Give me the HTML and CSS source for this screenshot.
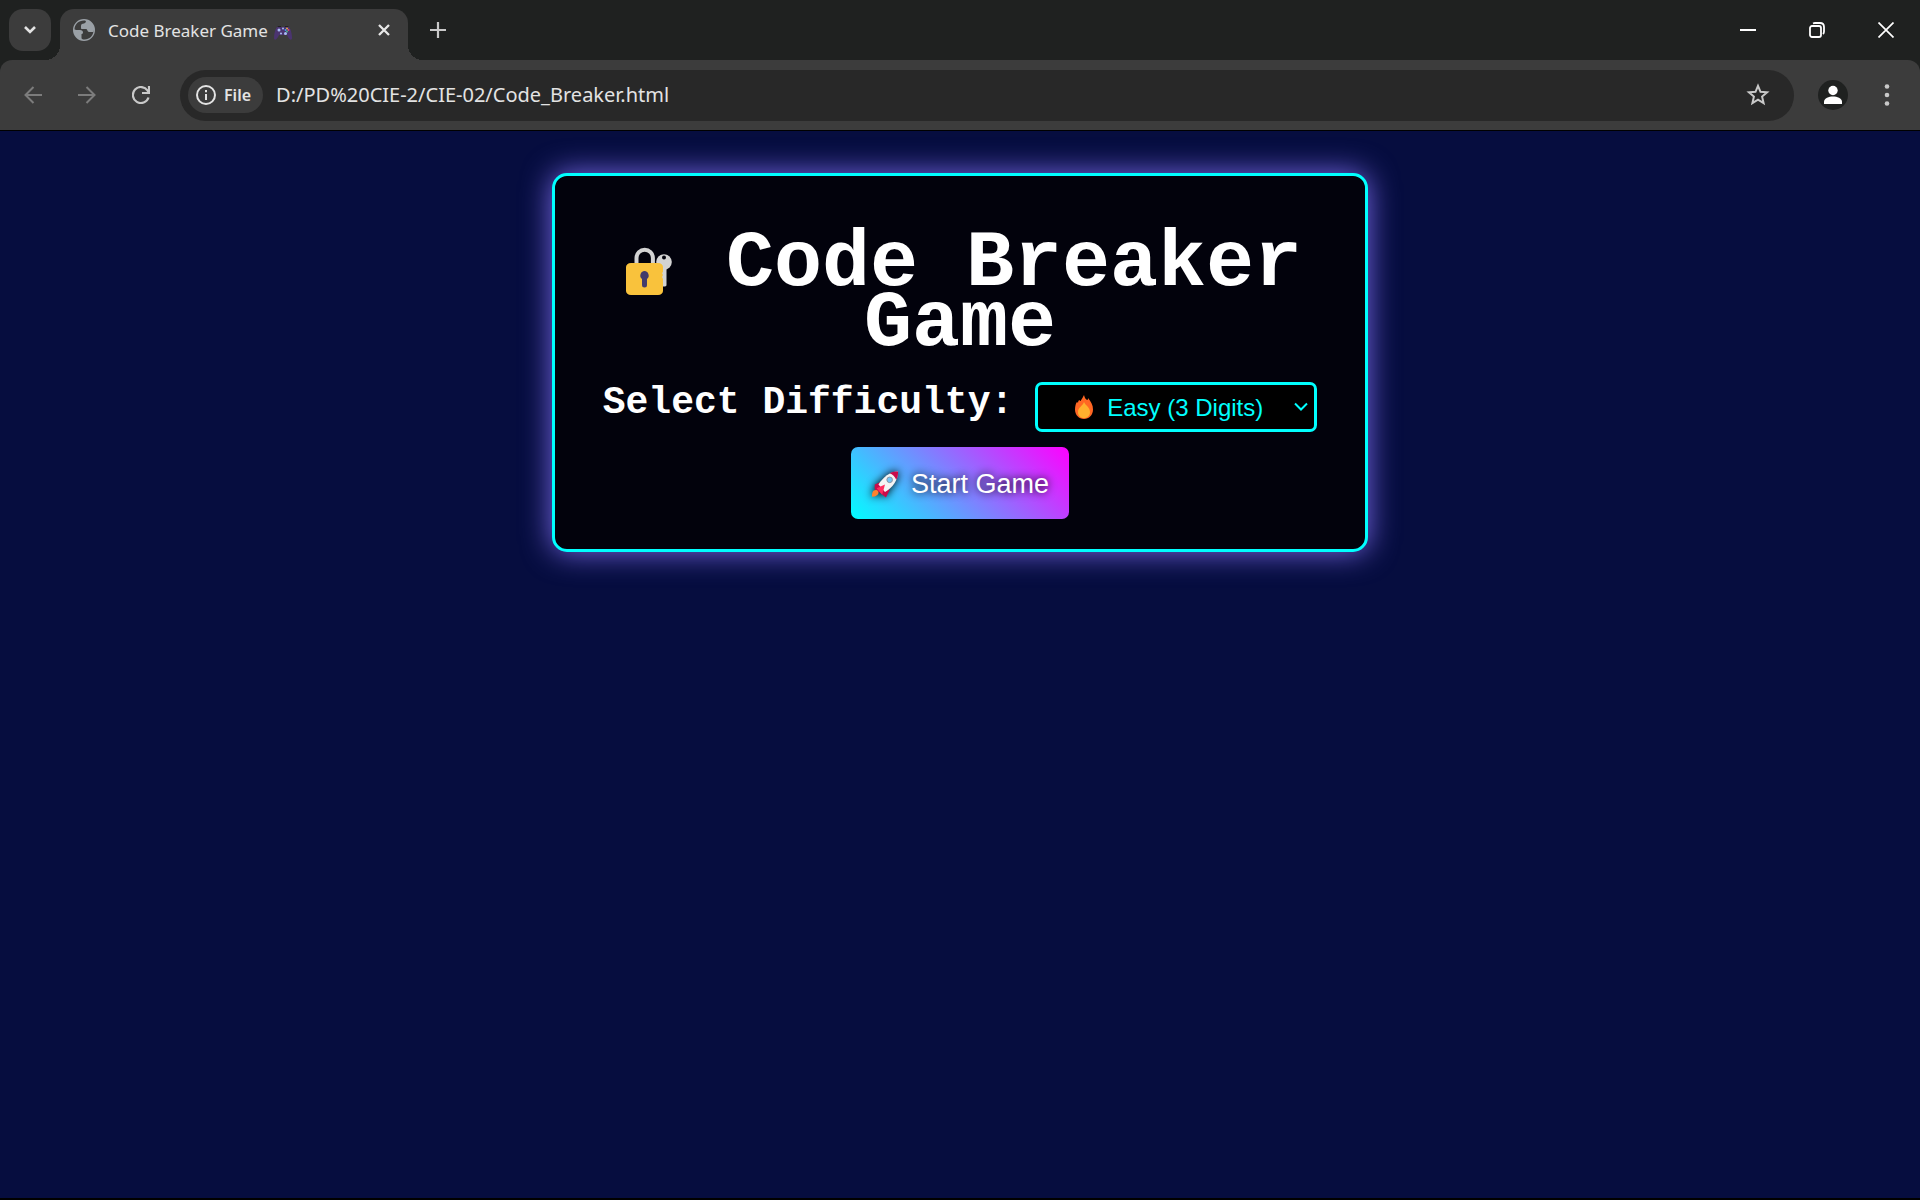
FILE: index.html
```html
<!DOCTYPE html>
<html lang="en">
<head>
<meta charset="utf-8">
<title>Code Breaker Game</title>
<link rel="stylesheet" href="styles.css">
</head>
<body>
<header class="browser">
  <div class="tabstrip">
    <button class="tab-search" aria-label="Search tabs"><svg width="14" height="10" viewBox="0 0 14 10"><path d="M2 2l5 5 5-5" fill="none" stroke="#e3e3e3" stroke-width="2.6"/></svg></button>
    <div class="tab">
      <svg width="22" height="22" viewBox="0 0 22 22"><circle cx="11" cy="11" r="9.800" fill="none" stroke="#9aa0a6" stroke-width="2.400"/><path d="M12 1.500C6 1 1.500 5 1.500 10.500H8c2 0 3 1 3 2.500v1.500H8v4.500c1 1 2 1.500 3.500 1.500 5 0 9-4 9-9-1 .5-2 1-3 .5-1.500-.5-1-2.500-3-2.500H9V7h3c1 0 1.500-.8 1.500-1.600V3.800C13.500 3 13 2 12 1.500z" fill="#3c3c3c"/><path d="M13 1.500c0 1.500-.5 2.500-2 3-1.500.3-3 .5-3 2.200V9c0 .6.400 1 1 1h4c1.500 0 1 2.500 3 3h4.500c1-6-2-10.500-7.500-11.500zM1.500 11H7c2 0 3 1 3 2.500S9 15 8.500 15v5C4 19 1.500 15.500 1.500 11z" fill="#9aa0a6"/></svg>
      <span class="tab-title">Code Breaker Game</span>
      <svg class="pad" width="18" height="15" viewBox="0 0 18 15"><path d="M4 1h3v2H3zM11 1h3l1 2h-4z" fill="#222"/><path d="M3 2h12c2 2 3 8 3 11 0 3-3 2-5-3H5c-2 5-5 6-5 3C0 10 1 4 3 2z" fill="#4b3470"/><g fill="#aabef5"><circle cx="5" cy="5" r="1.500"/><circle cx="7" cy="8.500" r="1"/><circle cx="11.500" cy="8.500" r="1.500"/><circle cx="9" cy="3.500" r="1"/></g><circle cx="13" cy="3.500" r=".9" fill="#f6b83c"/><circle cx="14.500" cy="5" r=".9" fill="#ef476f"/><circle cx="13" cy="6.500" r=".9" fill="#4cc38a"/><circle cx="11.500" cy="5" r=".9" fill="#3ba7f0"/></svg>
      <button class="tab-close" aria-label="Close tab"><svg width="12" height="12" viewBox="0 0 12 12"><path d="M1 1l10 10M11 1L1 11" stroke="#e8e8e8" stroke-width="2.300"/></svg></button>
    </div>
    <button class="new-tab" aria-label="New tab"><svg width="16" height="16" viewBox="0 0 16 16"><path d="M8 0v16M0 8h16" stroke="#c9c9c9" stroke-width="2.200"/></svg></button>
    <div class="window-buttons">
      <button aria-label="Minimize"><svg width="16" height="16" viewBox="0 0 16 16"><path d="M0 8h16" stroke="#fff" stroke-width="2"/></svg></button>
      <button aria-label="Restore"><svg width="16" height="16" viewBox="0 0 16 16" fill="none" stroke="#fff" stroke-width="1.800"><rect x="1" y="4" width="11" height="11" rx="2"/><path d="M4 1.500C5 1 5.500 1 6 1h5c2.500 0 4 1.500 4 4v4.500c0 1-.5 2-1 2.500"/></svg></button>
      <button aria-label="Close"><svg width="16" height="16" viewBox="0 0 16 16"><path d="M.5.5l15 15M15.500.5l-15 15" stroke="#fff" stroke-width="1.700"/></svg></button>
    </div>
  </div>
  <div class="toolbar">
    <nav class="nav">
      <button aria-label="Back"><svg width="18" height="18" viewBox="0 0 18 18" fill="none" stroke="#7c7c7c" stroke-width="2"><path d="M18 9H2M9.500 1L1.500 9l8 8"/></svg></button>
      <button aria-label="Forward"><svg width="18" height="18" viewBox="0 0 18 18" fill="none" stroke="#7c7c7c" stroke-width="2"><path d="M0 9h16M8.500 1l8 8-8 8"/></svg></button>
      <button aria-label="Reload"><svg width="18" height="18" viewBox="0 0 18 18" fill="none" stroke="#c9c9c9" stroke-width="2.200"><path d="M16.500 11.500A8 8 0 1 1 15.500 4.500L17 6.500M17 0v7h-7"/></svg></button>
    </nav>
    <div class="address">
      <button class="file-chip"><svg width="20" height="20" viewBox="0 0 20 20"><circle cx="10" cy="10" r="9" fill="none" stroke="#e3e3e3" stroke-width="2"/><path d="M10 9v6M10 5v2.200" stroke="#e3e3e3" stroke-width="2"/></svg>File</button>
      <input class="url" type="text" aria-label="Address" value="D:/PD%20CIE-2/CIE-02/Code_Breaker.html">
      <button aria-label="Bookmark"><svg width="24" height="24" viewBox="0 0 24 24"><path d="M12 2.800l2.500 6 6.600.5-5 4.300 1.500 6.500-5.600-3.500-5.600 3.500 1.500-6.500-5-4.300 6.600-.5z" fill="none" stroke="#c9c9c9" stroke-width="2"/></svg></button>
    </div>
    <button class="profile" aria-label="Profile"><svg width="30" height="30" viewBox="0 0 30 30"><circle cx="15" cy="15" r="15" fill="#1f2120"/><circle cx="15" cy="10.500" r="4.700" fill="#fff"/><path d="M6 24v-2c0-4 5-5.500 9-5.500s9 1.500 9 5.500v2z" fill="#fff"/></svg></button>
    <button class="menu" aria-label="Menu"><svg width="6" height="22" viewBox="0 0 6 22" fill="#c9c9c9"><circle cx="3" cy="2.500" r="2.300"/><circle cx="3" cy="11" r="2.300"/><circle cx="3" cy="19.500" r="2.300"/></svg></button>
  </div>
</header>
<main class="page">
  <section class="card">
    <h1 class="title"><svg class="lock" width="60" height="60" viewBox="0 0 60 60"><path d="M18.500 30v-9a8.200 8.200 0 0 1 16.400 0v9" fill="none" stroke="#d3d3d3" stroke-width="4"/><path d="M43 28h5.500v20c0 2-5 2-5.500 0z" fill="#d3d3d3"/><circle cx="46" cy="25" r="7.800" fill="#d3d3d3"/><circle cx="46" cy="20.500" r="2" fill="#02020c"/><path d="M13 26h27c3 0 5 2 5 4v5l-1 1 1 2-1 2 1 2v12c0 2-2 4-5 4H13c-3 0-5-2-5-4V30c0-2 2-4 5-4z" fill="#f9c23c"/><path d="M26.500 34a4.500 4.500 0 0 0-2.500 8v6a2.500 2.500 0 0 0 5 0v-6a4.500 4.500 0 0 0-2.500-8z" fill="#433b6b"/></svg> Code Breaker Game</h1>
    <form class="setup">
      <div class="row">
        <label for="difficulty">Select Difficulty:</label>
        <div class="select-box">
          <select id="difficulty">
            <option>Easy (3 Digits)</option>
          </select>
          <svg class="flame" width="20" height="24" viewBox="0 0 20 24"><path d="M10 0c1 4 2 4 3 5 1 0 1-1 1-2 3 4 5 7 5 11.500C19 20 15 24 10 24S1 20 1 14.500C1 11 2 8 3 7c.5 0 1 1 1 1 0-2 1-3 1.500-3C6 6 6 6 6.500 6 8 4 9 2 10 0z" fill="#ff6723"/><path d="M10 7c1 3 6 5 6 10 0 4-3 6-6 6s-6-2-6-6c0-5 5-6 6-10z" fill="#ffb02e"/></svg>
          <svg class="chevron" width="14" height="10" viewBox="0 0 14 10"><path d="M1 1.500l6 6 6-6" fill="none" stroke="#0ff" stroke-width="2"/></svg>
        </div>
      </div>
      <button class="start" type="button"><svg width="28" height="27" viewBox="0 0 30 28"><path d="M4 14l7-3 9 9-4 8-6-5-6-4z" fill="#ca0b4a"/><path d="M29 0C20 0 13 6 8 14l7 8C23 17 29 10 29 0z" fill="#f4f4f4"/><path d="M20 2c3-2 6-2 9-2 0 3 0 6-2 9-1-3-4-6-7-7z" fill="#ca0b4a"/><path d="M6 18l9-4-3 11z" fill="#ff2c5e"/><path d="M1 27c0-4 1-7 4-7s4 3 2 5-4 2-6 2z" fill="#ff822d"/><circle cx="20" cy="9" r="3" fill="#74c7f5" stroke="#8a8f9c"/></svg>Start Game</button>
    </form>
  </section>
</main>
</body>
</html>
```
FILE: styles.css
```css
* { box-sizing: border-box; }

body {
  display: flex;
  flex-direction: column;
  min-height: 100vh;
  margin: 0;
  font-family: "Noto Sans", "Open Sans", sans-serif;
  color: #fff;
  background: #060d3f;
  border-bottom: 2px solid #000;
}

button {
  display: flex;
  align-items: center;
  justify-content: center;
  padding: 0;
  border: 0;
  background: none;
  color: inherit;
  font: inherit;
}

svg { flex: none; }

.browser {
  background: #1f2120;
  border-bottom: 1px solid #000;
}

.tabstrip {
  display: flex;
  align-items: flex-start;
  height: 60px;
  padding: 9px 0 0 9px;
}

.tab-search {
  width: 42px;
  height: 42px;
  margin-right: 9px;
  border-radius: 14px;
  background: #3c3c3c;
}

.tab {
  position: relative;
  display: flex;
  align-items: center;
  width: 348px;
  height: 51px;
  padding: 0 18px 9px 13px;
  border-radius: 14px 14px 0 0;
  background: #3c3c3c;
}

.tab::before,
.tab::after {
  content: "";
  position: absolute;
  bottom: 0;
  width: 15px;
  height: 15px;
}

.tab::before {
  right: 100%;
  background: radial-gradient(circle at 0 0, transparent 15px, #3c3c3c 15px);
}

.tab::after {
  left: 100%;
  background: radial-gradient(circle at 100% 0, transparent 15px, #3c3c3c 15px);
}

.tab-title {
  margin-left: 13px;
  padding-top: 2px;
  font-size: 17px;
  line-height: 24px;
  color: #e3e3e3;
}

.pad {
  margin-top: 4px;
  margin-left: 6px;
}

.tab-close { margin-left: auto; }

.new-tab {
  width: 32px;
  height: 42px;
  margin-left: 14px;
}

.window-buttons {
  display: flex;
  margin-left: auto;
}

.window-buttons button {
  width: 69px;
  height: 42px;
}

.toolbar {
  display: flex;
  align-items: center;
  height: 70px;
  padding: 0 24px;
  border-radius: 12px 12px 0 0;
  background: #3c3c3c;
}

.nav {
  display: flex;
  gap: 36px;
  margin-right: 30px;
}

.address {
  display: flex;
  flex: 1;
  align-items: center;
  height: 51px;
  padding: 0 24px 0 8px;
  border-radius: 26px;
  background: #282828;
}

.file-chip {
  gap: 8px;
  height: 36px;
  padding: 0 12px 0 8px;
  border-radius: 18px;
  background: #3c3c3c;
  color: #e3e3e3;
  font-size: 16px;
  font-weight: 600;
}

.url {
  flex: 1;
  min-width: 0;
  margin: 0;
  padding: 0 13px 2px;
  border: 0;
  outline: 0;
  background: none;
  color: #e3e3e3;
  font-family: inherit;
  font-size: 20px;
}

.profile { margin: 0 36px 0 24px; }

.menu { width: 6px; margin-right: 6px; }

.page {
  flex: 1;
  padding: 42px 24px;
}

.card {
  max-width: 816px;
  margin: 0 auto;
  padding: 58px 30px 30px;
  border: 3px solid #0ff;
  border-radius: 15px;
  background: #02020c;
  box-shadow: 0 0 30px #7b6bea;
}

.title {
  margin: 0 0 28px;
  font-family: "Liberation Mono", monospace;
  font-size: 80px;
  line-height: 60px;
  text-align: center;
}

.lock {
  margin-bottom: -12px;
  vertical-align: baseline;
}

.setup {
  display: flex;
  flex-direction: column;
  align-items: center;
  gap: 15px;
  font-family: "Liberation Sans", Arial, sans-serif;
}

.row {
  display: flex;
  align-items: center;
  gap: 22px;
}

.row label {
  padding-bottom: 8px;
  font-family: "Liberation Mono", monospace;
  font-size: 38px;
  font-weight: 700;
  line-height: 40px;
}

.select-box { position: relative; }

.select-box select {
  display: block;
  width: 282px;
  height: 50px;
  padding: 0 48px 0 69px;
  border: 3px solid #0ff;
  border-radius: 7px;
  appearance: none;
  background: #000;
  color: #0ff;
  font-family: inherit;
  font-size: 24px;
}

.flame,
.chevron {
  position: absolute;
  top: 50%;
  transform: translateY(-50%);
  pointer-events: none;
}

.flame { left: 39px; }

.chevron { right: 9px; }

.start {
  gap: 12px;
  width: 218px;
  height: 72px;
  padding-top: 2px;
  border-radius: 7px;
  background: linear-gradient(45deg, #0ff, #f0f);
  font-size: 27px;
  text-shadow: 0 0 8px #000;
}

.start svg { filter: drop-shadow(0 0 4px #000); }
```
